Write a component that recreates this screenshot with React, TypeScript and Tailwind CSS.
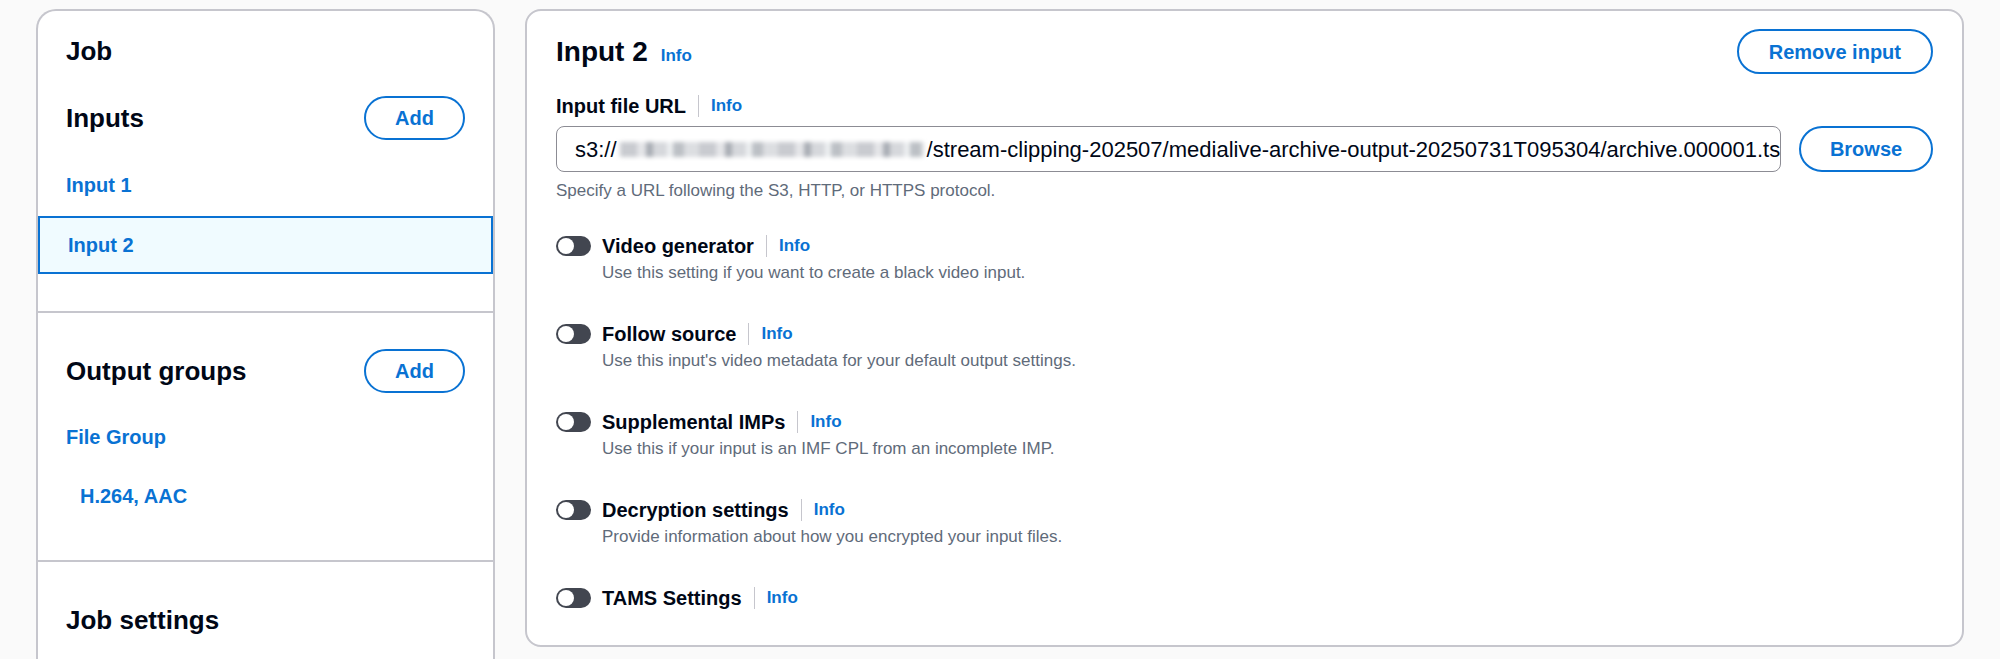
import React from "react";

const Info = () => (
  <a className="cursor-pointer text-[17px] font-bold leading-[22px] text-[#0972d3]">Info</a>
);

const Divider = () => <span className="mx-[12px] h-[22px] w-px bg-[#c6c6cd]" />;

const PillButton = ({ label, className = "" }: { label: string; className?: string }) => (
  <button
    className={`flex items-center justify-center rounded-full border-2 border-[#0972d3] bg-white text-[20px] font-bold text-[#0972d3] ${className}`}
  >
    {label}
  </button>
);

const Toggle = () => (
  <span className="flex h-[20px] w-[35px] shrink-0 items-center rounded-full bg-[#424650] px-[2px]">
    <span className="h-[16px] w-[16px] rounded-full bg-white" />
  </span>
);

type Setting = { label: string; desc?: string };

const settings: Setting[] = [
  { label: "Video generator", desc: "Use this setting if you want to create a black video input." },
  { label: "Follow source", desc: "Use this input's video metadata for your default output settings." },
  { label: "Supplemental IMPs", desc: "Use this if your input is an IMF CPL from an incomplete IMP." },
  { label: "Decryption settings", desc: "Provide information about how you encrypted your input files." },
  { label: "TAMS Settings" },
];

const SettingRow = ({ label, desc }: Setting) => (
  <div className="flex flex-col gap-[4px]">
    <div className="flex h-[24px] items-center">
      <Toggle />
      <span className="ml-[11px] text-[20px] font-bold leading-[24px] text-[#000716]">{label}</span>
      <Divider />
      <Info />
    </div>
    {desc && <p className="pl-[46px] text-[17px] leading-[22px] text-[#5f6b7a]">{desc}</p>}
  </div>
);

const NavLink = ({ children, className = "" }: { children: React.ReactNode; className?: string }) => (
  <a className={`block cursor-pointer text-[20px] font-bold leading-[24px] text-[#0972d3] ${className}`}>{children}</a>
);

const Sidebar = () => (
  <aside className="w-[459px] shrink-0 self-start rounded-t-[20px] border-2 border-b-0 border-[#c6c6cd] bg-white">
    <div className="px-[28px] pt-[24px]">
      <h2 className="text-[26px] font-bold leading-[32px] text-[#000716]">Job</h2>
      <div className="mt-[29px] flex h-[44px] items-center justify-between">
        <h3 className="text-[26px] font-bold leading-[32px] text-[#000716]">Inputs</h3>
        <PillButton label="Add" className="h-[44px] w-[101px]" />
      </div>
      <NavLink className="mt-[33px]">Input 1</NavLink>
    </div>
    <div className="mt-[19px] flex h-[58px] items-center border-2 border-[#0972d3] bg-[#f0fbff] px-[28px]">
      <NavLink>Input 2</NavLink>
    </div>
    <div className="h-[39px] border-b-2 border-[#c6c6cd]" />

    <div className="border-b-2 border-[#c6c6cd] px-[28px] pb-[52px] pt-[36px]">
      <div className="flex h-[44px] items-center justify-between">
        <h3 className="text-[26px] font-bold leading-[32px] text-[#000716]">Output groups</h3>
        <PillButton label="Add" className="h-[44px] w-[101px]" />
      </div>
      <NavLink className="mt-[32px]">File Group</NavLink>
      <NavLink className="mt-[35px] pl-[14px]">H.264, AAC</NavLink>
    </div>

    <div className="px-[28px] pb-[60px] pt-[42px]">
      <h3 className="text-[26px] font-bold leading-[32px] text-[#000716]">Job settings</h3>
    </div>
  </aside>
);

const InputPanel = () => (
  <section className="min-w-0 flex-1 self-start rounded-[16px] border-2 border-[#c6c6cd] bg-white px-[29px] pb-[35px] pt-[18px]">
    <div className="flex h-[45px] items-center justify-between">
      <div className="flex items-baseline gap-[13px]">
        <h2 className="text-[28px] font-bold leading-[34px] text-[#000716]">Input 2</h2>
        <Info />
      </div>
      <PillButton label="Remove input" className="h-[45px] px-[30px]" />
    </div>

    <div className="mt-[20px] flex h-[24px] items-center">
      <span className="text-[20px] font-bold leading-[24px] text-[#000716]">Input file URL</span>
      <Divider />
      <Info />
    </div>

    <div className="mt-[8px] flex gap-[18px]">
      <div className="flex h-[46px] min-w-0 flex-1 items-center overflow-hidden whitespace-nowrap rounded-[8px] border border-[#8c8c94] px-[18px] text-[22px] text-[#000716]">
        <span>s3://</span>
        {/* redacted bucket name */}
        <span className="mx-[3px] inline-block h-[15px] w-[304px] shrink-0 bg-[repeating-linear-gradient(90deg,#c9cbd0_0_17px,#e4e5e8_17px_26px,#a9adb4_26px_33px,#d6d8dc_33px_47px,#eef0f2_47px_53px,#bcc0c5_53px_64px,#dcdee1_64px_79px)] blur-[2px]" />
        <span>/stream-clipping-202507/medialive-archive-output-20250731T095304/archive.000001.ts</span>
      </div>
      <PillButton label="Browse" className="h-[46px] w-[134px] shrink-0" />
    </div>

    <p className="mt-[8px] text-[17px] leading-[22px] text-[#5f6b7a]">
      Specify a URL following the S3, HTTP, or HTTPS protocol.
    </p>

    <div className="mt-[32px] flex flex-col gap-[38px]">
      {settings.map((s) => (
        <SettingRow key={s.label} {...s} />
      ))}
    </div>
  </section>
);

export default function App() {
  return (
    <div className="flex h-[659px] gap-[30px] overflow-hidden bg-[#fafafa] px-[36px] pt-[9px] font-['Liberation_Sans',Arial,sans-serif]">
      <Sidebar />
      <InputPanel />
    </div>
  );
}
